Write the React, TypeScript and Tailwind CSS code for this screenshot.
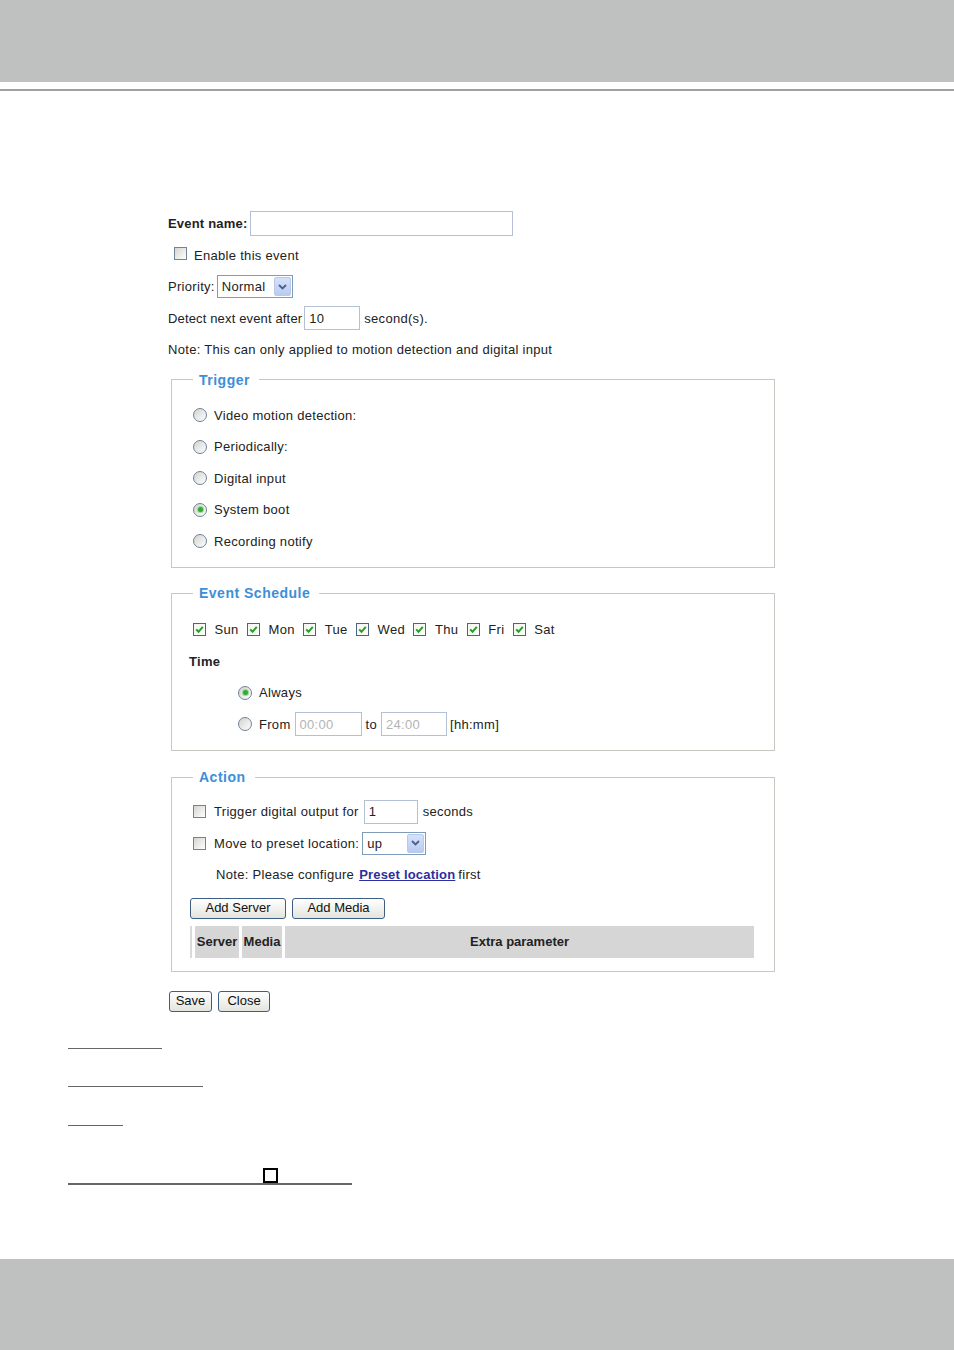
import React from 'react';

const Check = ({checked = false}: {checked?: boolean}) => (
    <span
        className={
            checked
                ? 'inline-flex h-[13px] w-[13px] shrink-0 items-center justify-center border border-[#4b6584] bg-linear-to-br from-[#f4f4f0] to-white'
                : 'inline-flex h-[13px] w-[13px] shrink-0 items-center justify-center border border-[#6f8399] bg-linear-to-br from-[#d5d5d0] to-white'
        }
    >
        {checked && (
            <svg width="9" height="9" viewBox="0 0 9 9">
                <path d="M1.2 4.4 L3.5 6.8 L7.8 1.8" fill="none" stroke="#21a121" strokeWidth="2"/>
            </svg>
        )}
    </span>
);

const Radio = ({checked = false}: {checked?: boolean}) => (
    <span
        className="inline-flex h-[14px] w-[14px] shrink-0 items-center justify-center rounded-full border border-[#6f8399] bg-linear-to-br from-[#d2d2ce] to-white">
        {checked && <span className="h-[5px] w-[5px] rounded-full bg-[#2fae2f] ring-1 ring-[#9ad89a]"/>}
    </span>
);

const Select = ({value, width}: {value: string; width: string}) => (
    <span className={`flex h-[23px] items-center justify-between border border-[#7f9db9] bg-white pl-[4px] pr-[1px] ${width}`}>
        <span>{value}</span>
        <span
            className="flex h-[19px] w-[17px] items-center justify-center rounded-[2px] border border-[#b8c9ec] bg-linear-to-b from-[#d6e1fb] to-[#b9cbf3]">
            <svg width="9" height="6" viewBox="0 0 9 6">
                <path d="M1 1 L4.5 4.5 L8 1" fill="none" stroke="#4d6185" strokeWidth="1.8"/>
            </svg>
        </span>
    </span>
);

const Input = ({value = '', width, disabled = false}: {value?: string; width: string; disabled?: boolean}) => (
    <span
        className={`flex h-[24px] items-center border border-[#b4c0d3] bg-white px-[4px] ${width} ${disabled ? 'text-[#b4b4b4]' : ''}`}>
        {value}
    </span>
);

const Btn = ({label, width}: {label: string; width: string}) => (
    <span
        className={`flex h-[21px] items-center justify-center rounded-[3px] border border-[#3d5e85] bg-linear-to-b from-white to-[#e4e4de] text-[13px] tracking-normal text-[#111] ${width}`}>
        {label}
    </span>
);

const Legend = ({title}: {title: string}) => (
    <legend className="pl-[6px] pr-[9px] text-[14px] font-bold leading-[18px] tracking-[0.5px] text-[#3d8ed8]">{title}</legend>
);

const Row = ({children, className = ''}: {children: React.ReactNode; className?: string}) => (
    <div className={`flex h-[31.5px] items-center ${className}`}>{children}</div>
);

const days = ['Sun', 'Mon', 'Tue', 'Wed', 'Thu', 'Fri', 'Sat'];
const triggers = ['Video motion detection:', 'Periodically:', 'Digital input', 'System boot', 'Recording notify'];

export default function App() {
    return (
        <div className="flex min-h-[1350px] flex-col bg-white text-[13px] tracking-[0.3px] text-[#222] font-['Liberation_Sans',Arial,sans-serif]">
            {/* top band */}
            <div className="h-[82px] bg-[#bfc1c0]"/>
            <div className="mt-[7px] h-[2px] bg-[#a0a0a0]"/>

            <div className="pl-[168px] pt-[117px]">
                <Row>
                    <span className="font-bold tracking-[0.2px]">Event name:</span>
                    <span className="ml-[2px] h-[25px] w-[263px] border border-[#b4c0d3] bg-white"/>
                </Row>
                <Row>
                    <span className="ml-[6px]"><Check/></span>
                    <span className="ml-[7px]">Enable this event</span>
                </Row>
                <Row>
                    <span>Priority:</span>
                    <span className="ml-[2px]"><Select value="Normal" width="w-[76px]"/></span>
                </Row>
                <Row>
                    <span className="tracking-[0.15px]">Detect next event after</span>
                    <span className="ml-[2px]"><Input value="10" width="w-[56px]"/></span>
                    <span className="ml-[4px]">second(s).</span>
                </Row>
                <Row>
                    <span>Note: This can only applied to motion detection and digital input</span>
                </Row>

                {/* Trigger */}
                <fieldset className="ml-[3px] mt-[5px] w-[604px] border border-[#cac7c3] pb-[10px] pl-[21px] pt-[11px]">
                    <Legend title="Trigger"/>
                    {triggers.map((t, i) => (
                        <Row key={t}>
                            <Radio checked={i === 3}/>
                            <span className="ml-[7px]">{t}</span>
                        </Row>
                    ))}
                </fieldset>

                {/* Event Schedule */}
                <fieldset className="ml-[3px] mt-[16px] w-[604px] border border-[#cac7c3] pb-[10px] pl-[21px] pt-[12px]">
                    <Legend title="Event Schedule"/>
                    <Row>
                        {days.map(d => (
                            <span key={d} className="mr-[8.5px] flex items-center">
                                <Check checked/>
                                <span className="ml-[8.5px]">{d}</span>
                            </span>
                        ))}
                    </Row>
                    <Row>
                        <span className="-ml-[4px] font-bold">Time</span>
                    </Row>
                    <Row className="pl-[45px]">
                        <Radio checked/>
                        <span className="ml-[7px]">Always</span>
                    </Row>
                    <Row className="pl-[45px]">
                        <Radio/>
                        <span className="ml-[7px]">From</span>
                        <span className="ml-[4px]"><Input value="00:00" width="w-[67px]" disabled/></span>
                        <span className="ml-[4px]">to</span>
                        <span className="ml-[4px]"><Input value="24:00" width="w-[66px]" disabled/></span>
                        <span className="ml-[3px]">[hh:mm]</span>
                    </Row>
                </fieldset>

                {/* Action */}
                <fieldset className="ml-[3px] mt-[17px] w-[604px] border border-[#cac7c3] pb-[13px] pl-[21px] pt-[10px]">
                    <Legend title="Action"/>
                    <Row>
                        <Check/>
                        <span className="ml-[8px]">Trigger digital output for</span>
                        <span className="ml-[5px]"><Input value="1" width="w-[54px]"/></span>
                        <span className="ml-[5px]">seconds</span>
                    </Row>
                    <Row>
                        <Check/>
                        <span className="ml-[8px]">Move to preset location:</span>
                        <span className="ml-[3px]"><Select value="up" width="w-[64px]"/></span>
                    </Row>
                    <Row className="pl-[23px]">
                        <span>Note: Please configure</span>
                        <a href="#" className="ml-[5px] font-bold tracking-[0.2px] text-[#2e2e9e] underline">Preset location</a>
                        <span className="ml-[3px]">first</span>
                    </Row>
                    <div className="-ml-[3px] mt-[7px] flex gap-[6px]">
                        <Btn label="Add Server" width="w-[96px]"/>
                        <Btn label="Add Media" width="w-[93px]"/>
                    </div>
                    <div className="-ml-[3px] mt-[7px] flex h-[32px] w-[564px] gap-[3px] font-bold tracking-normal">
                        <div className="w-[2px] bg-[#dadada]"/>
                        <div className="flex w-[44px] items-center justify-center bg-[#d6d6d6]">Server</div>
                        <div className="flex w-[40px] items-center justify-center bg-[#d6d6d6]">Media</div>
                        <div className="flex flex-1 items-center justify-center bg-[#d6d6d6]">Extra parameter</div>
                    </div>
                </fieldset>

                <div className="ml-[1px] mt-[19px] flex gap-[6px]">
                    <Btn label="Save" width="w-[43px]"/>
                    <Btn label="Close" width="w-[52px]"/>
                </div>
            </div>

            {/* rules */}
            <div className="pl-[68px]">
                <div className="mt-[36px] h-px w-[94px] bg-[#666]"/>
                <div className="mt-[37px] h-px w-[135px] bg-[#666]"/>
                <div className="mt-[38px] h-px w-[55px] bg-[#666]"/>
                <div className="mt-[42px] flex w-[284px] border-b-2 border-[#666]">
                    <span className="ml-[195px] h-[15px] w-[15px] border-2 border-black bg-white"/>
                </div>
            </div>

            <div className="mt-auto h-[91px] bg-[#bfc1c0]"/>
        </div>
    );
}
